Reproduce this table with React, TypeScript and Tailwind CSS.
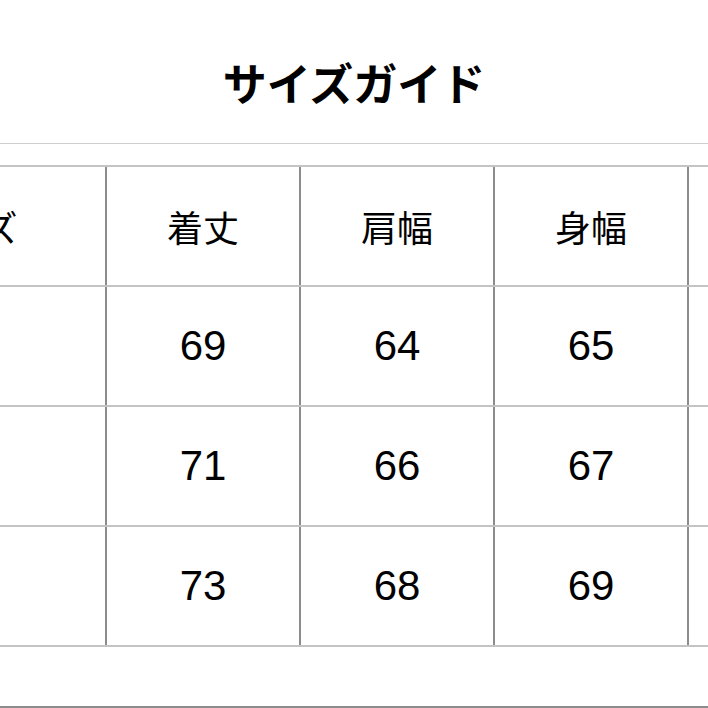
import React from 'react';

const headers = ['サイズ', '着丈', '肩幅', '身幅', ''];

const rows = [
    ['', '69', '64', '65', ''],
    ['', '71', '66', '67', ''],
    ['', '73', '68', '69', ''],
];

const colWidths = ['w-[284px]', 'w-[194px]', 'w-[194px]', 'w-[194px]', 'w-[194px]'];

export default function App() {
    return (
        <div
            className="w-[708px] h-[708px] overflow-hidden bg-white text-black"
            style={{ fontFamily: '"Liberation Sans", "Noto Sans CJK JP", sans-serif' }}
        >
            <div className="h-[143px] pt-[20px] flex items-center justify-center">
                <h1
                    className="text-[44px] leading-none font-bold tracking-[0px]"
                    style={{ fontFamily: '"Noto Sans CJK JP", sans-serif' }}
                >
                    サイズガイド
                </h1>
            </div>
            <div className="h-px bg-[#cfcfcf]" />

            <div className="mt-[21px] ml-[-179px] w-[1060px]">
                {[headers, ...rows].map((row, r) => (
                    <div
                        key={r}
                        className={`flex h-[120px] box-border border-t-2 border-[#c4c4c4] ${r === 3 ? 'h-[122px] border-b-2' : ''}`}
                    >
                        {row.map((cell, c) => (
                            <div
                                key={c}
                                className={`${colWidths[c]} shrink-0 border-l-2 border-[#8c8c8c] flex items-center justify-center`}
                            >
                                {r === 0 ? (
                                    <span
                                        className="text-[36px] leading-none"
                                        style={{ fontFamily: '"Noto Sans CJK JP", sans-serif' }}
                                    >
                                        {cell}
                                    </span>
                                ) : (
                                    <span className="text-[42px] leading-none">{cell}</span>
                                )}
                            </div>
                        ))}
                    </div>
                ))}
            </div>

            <div className="mt-[59px] h-[2px] bg-[#8c8c8c]" />
        </div>
    );
}
